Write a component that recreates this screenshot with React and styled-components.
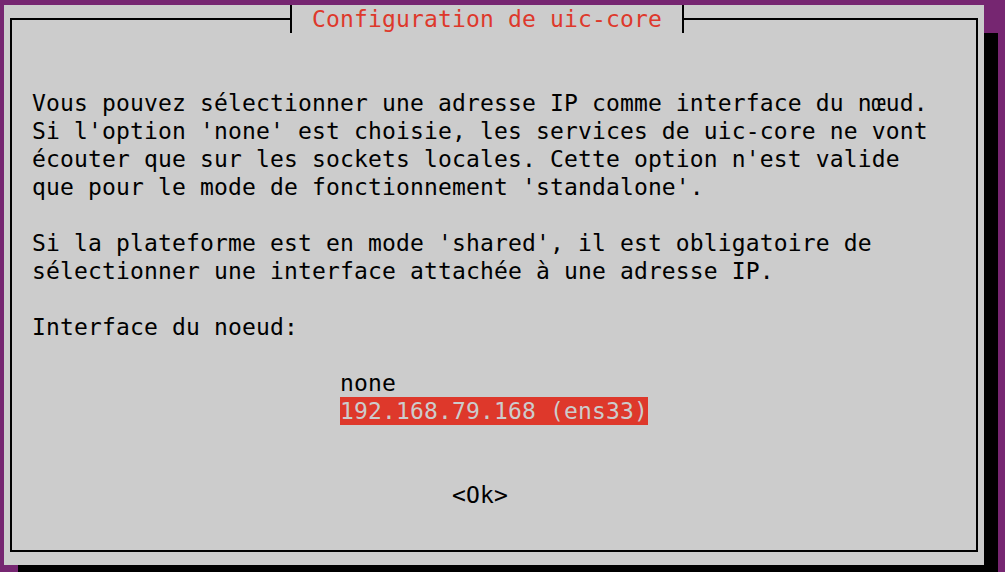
import React from 'react'
import styled, { createGlobalStyle } from 'styled-components'

const PURPLE = '#762671'
const GREY = '#cccccc'
const RED = '#de382b'
const ROW = 28

const GlobalStyle = createGlobalStyle`
  html, body {
    margin: 0;
    padding: 0;
    background: ${PURPLE};
    overflow: hidden;
  }
  body {
    font-family: "DejaVu Sans Mono", "Liberation Mono", monospace;
    font-size: 23px;
    letter-spacing: 0.15px;
    line-height: ${ROW}px;
  }
`

const Screen = styled.div`
  width: 1005px;
  height: 572px;
  padding: 5px 0 0 4px;
  box-sizing: border-box;
`

const Dialog = styled.div`
  position: relative;
  display: flex;
  width: 980px;
  height: 560px;
  padding: 13px 6px;
  box-sizing: border-box;
  background: ${GREY};
  box-shadow: 14px 28px 0 #000;
`

const Title = styled.div`
  position: absolute;
  top: 0;
  left: 286px;
  height: ${ROW}px;
  padding: 0 20px;
  border-left: 2px solid #000;
  border-right: 2px solid #000;
  background: ${GREY};
  color: ${RED};
  white-space: pre;
`

const Frame = styled.div`
  flex: 1;
  display: flex;
  flex-direction: column;
  border: 2px solid #000;
  padding: 69px 20px 0;
  color: #000;
`

const Block = styled.div`
  margin-top: ${p => (p.$gap || 0) * ROW}px;
  margin-left: ${p => p.$indent || 0}px;
  white-space: pre;
`

const Line = styled.div`
  height: ${ROW}px;
`

const Item = styled.span`
  display: inline-block;
  height: ${ROW}px;
  background: ${p => (p.$selected ? RED : 'transparent')};
  color: ${p => (p.$selected ? GREY : '#000')};
`

const Button = styled.div`
  margin-top: ${ROW * 2}px;
  margin-left: 420px;
  white-space: pre;
`

const intro = [
  'Vous pouvez sélectionner une adresse IP comme interface du nœud.',
  "Si l'option 'none' est choisie, les services de uic-core ne vont",
  "écouter que sur les sockets locales. Cette option n'est valide",
  "que pour le mode de fonctionnement 'standalone'."
]

const shared = [
  "Si la plateforme est en mode 'shared', il est obligatoire de",
  'sélectionner une interface attachée à une adresse IP.'
]

const options = ['none', '192.168.79.168 (ens33)']

export default function App () {
  return (
    <Screen>
      <GlobalStyle />
      <Dialog>
        <Title>Configuration de uic-core</Title>
        <Frame>
          <Block>
            {intro.map(l => <Line key={l}>{l}</Line>)}
          </Block>
          <Block $gap={1}>
            {shared.map(l => <Line key={l}>{l}</Line>)}
          </Block>
          <Block $gap={1}>
            <Line>Interface du noeud:</Line>
          </Block>
          <Block $gap={1} $indent={308}>
            {options.map((o, i) => (
              <Line key={o}>
                <Item $selected={i === 1}>{o}</Item>
              </Line>
            ))}
          </Block>
          <Button>{'<Ok>'}</Button>
        </Frame>
      </Dialog>
    </Screen>
  )
}
